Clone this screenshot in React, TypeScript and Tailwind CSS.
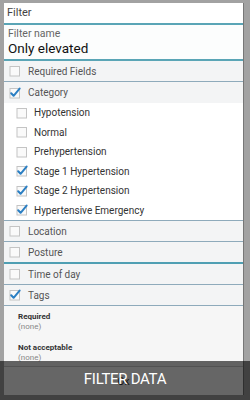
import React from 'react';

const font = { fontFamily: 'Roboto, "Noto Sans", sans-serif' };

const Box: React.FC<{ checked?: boolean }> = ({ checked }) => (
    <svg width="12" height="12" viewBox="0 0 12 12" className="shrink-0">
        <rect x="1" y="1.5" width="9.5" height="9.5" fill="#fafafa" stroke="#c4c4c4" strokeWidth="1" />
        {checked && (
            <path d="M2.2 6.2 L4.6 8.8 L10.6 1.6" fill="none" stroke="#2b7fc3" strokeWidth="2" strokeLinecap="round" strokeLinejoin="round" />
        )}
    </svg>
);

const SectionRow: React.FC<{ label: string; checked?: boolean; last?: boolean }> = ({ label, checked, last }) => (
    <div className={`flex items-center gap-[7px] h-[21px] pl-[5px] bg-[#f3f4f5] ${last ? '' : 'border-b border-[#8eaabb]'}`}>
        <Box checked={checked} />
        <span className="text-[10px] text-[#555]">{label}</span>
    </div>
);

const SubRow: React.FC<{ label: string; checked?: boolean }> = ({ label, checked }) => (
    <div className="flex items-center gap-[6px] h-[19.5px] pl-[12px]">
        <Box checked={checked} />
        <span className="text-[10px] text-[#333]">{label}</span>
    </div>
);

export default function App() {
    const categories = [
        { label: 'Hypotension', checked: false },
        { label: 'Normal', checked: false },
        { label: 'Prehypertension', checked: false },
        { label: 'Stage 1 Hypertension', checked: true },
        { label: 'Stage 2 Hypertension', checked: true },
        { label: 'Hypertensive Emergency', checked: true },
    ];

    return (
        <div className="relative w-[250px] h-[400px] overflow-hidden bg-[#a2a2a2]" style={font}>
            <div className="ml-[4px] mt-[3px] w-[240px] h-[392px] bg-white border-r border-[#777] flex flex-col">
                {/* Title */}
                <div className="h-[20px] flex items-center pl-[3px] text-[11px] text-[#444]">Filter</div>
                <div className="h-[2px] bg-[#5aa5b6]" />

                {/* Filter name */}
                <div className="h-[34px] flex flex-col justify-center pl-[4px] bg-[#fcfdfd]">
                    <span className="text-[10.5px] leading-[13px] text-[#666]">Filter name</span>
                    <span className="text-[13.5px] leading-[17px] text-[#111]">Only elevated</span>
                </div>
                <div className="h-[2px] bg-[#5aa5b6]" />

                <SectionRow label="Required Fields" />
                <SectionRow label="Category" checked last />
                <div className="border-b border-[#8eaabb]">
                    {categories.map((c) => (
                        <SubRow key={c.label} label={c.label} checked={c.checked} />
                    ))}
                </div>
                <SectionRow label="Location" />
                <div className="border-b-2 border-[#4f9fb3]">
                    <div className="flex items-center gap-[7px] h-[20px] pl-[5px] bg-[#f3f4f5]">
                        <Box />
                        <span className="text-[10px] text-[#555]">Posture</span>
                    </div>
                </div>
                <SectionRow label="Time of day" />
                <SectionRow label="Tags" checked />

                {/* Tags detail */}
                <div className="flex flex-col pl-[14px] pt-[6px] bg-[#f6f6f6] flex-1">
                    <span className="text-[8px] font-bold leading-[10px] text-[#333]">Required</span>
                    <span className="text-[8px] leading-[10px] text-[#888]">(none)</span>
                    <span className="text-[8px] font-bold leading-[10px] text-[#333] mt-[11px]">Not acceptable</span>
                    <span className="text-[8px] leading-[10px] text-[#888]">(none)</span>
                </div>

                {/* Dialog button */}
                <div className="h-[29px] border-t border-[#ccc] flex items-center justify-center text-[10px] text-[#333] bg-white">
                    Ok
                </div>
            </div>

            {/* Toast overlay */}
            <div className="absolute left-0 right-0 bottom-0 h-[39px] bg-black/60 flex items-start justify-center pt-[7px]">
                <span className="text-white text-[15px] tracking-[-0.3px]">FILTER DATA</span>
            </div>
        </div>
    );
}
